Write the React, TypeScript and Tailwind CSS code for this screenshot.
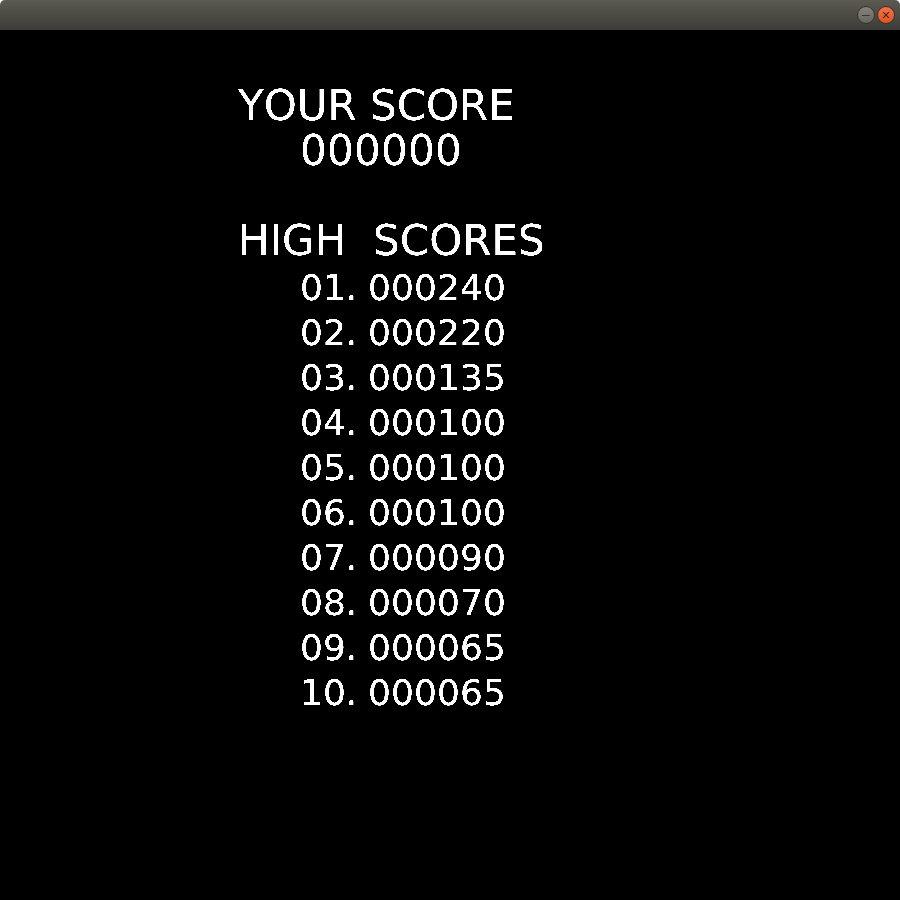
const scores = ["000240","000220","000135","000100","000100","000100","000090","000070","000065","000065"];

export default function App() {
  return (
    <div className="flex h-[900px] w-[900px] flex-col overflow-hidden bg-white">
      <header className="flex h-[30px] shrink-0 items-center justify-end rounded-t-[5px] bg-linear-to-b from-[#5c5a51] to-[#3d3c38] pr-[4px]">
        <svg width="20" height="20" viewBox="0 0 20 20">
          <defs>
            <linearGradient id="gray" x2="0" y2="1">
              <stop stopColor="#85837a" />
              <stop offset="1" stopColor="#66645d" />
            </linearGradient>
            <linearGradient id="orange" x2="0" y2="1">
              <stop stopColor="#f37248" />
              <stop offset="1" stopColor="#e2531f" />
            </linearGradient>
          </defs>
          <circle cx="10" cy="10" r="8.5" fill="url(#gray)" stroke="#33322e" />
          <path d="M6 10.5h8" stroke="#383732" />
        </svg>
        <svg width="20" height="20" viewBox="0 0 20 20">
          <circle cx="10" cy="10" r="8.5" fill="url(#orange)" stroke="#33322e" />
          <path d="M7.2 7.2l5.6 5.6M12.8 7.2l-5.6 5.6" stroke="#3d2a20" strokeWidth="1.1" />
        </svg>
      </header>
      <main className="flex grow flex-col border-b-2 border-[#0a0003] bg-black pt-[53px] pl-[238px] font-['DejaVu_Sans',sans-serif] text-[42px] leading-[45px] whitespace-pre text-white brightness-125 contrast-[6] [font-kerning:none]">
        <h1>YOUR SCORE</h1>
        <p className="pl-[62px] tracking-[0.28px]">000000</p>
        <h2 className="mt-[45px] tracking-[0.05px]">HIGH  SCORES</h2>
        <ol className="pt-[2px] pl-[62px] text-[36px]">
          {scores.map((s, i) => (
            <li key={i} className="flex h-[45px]">
              <span className="w-[68px]">{String(i + 1).padStart(2, "0")}.</span>
              <span className="tracking-[0.1px]">{s}</span>
            </li>
          ))}
        </ol>
      </main>
    </div>
  );
}
